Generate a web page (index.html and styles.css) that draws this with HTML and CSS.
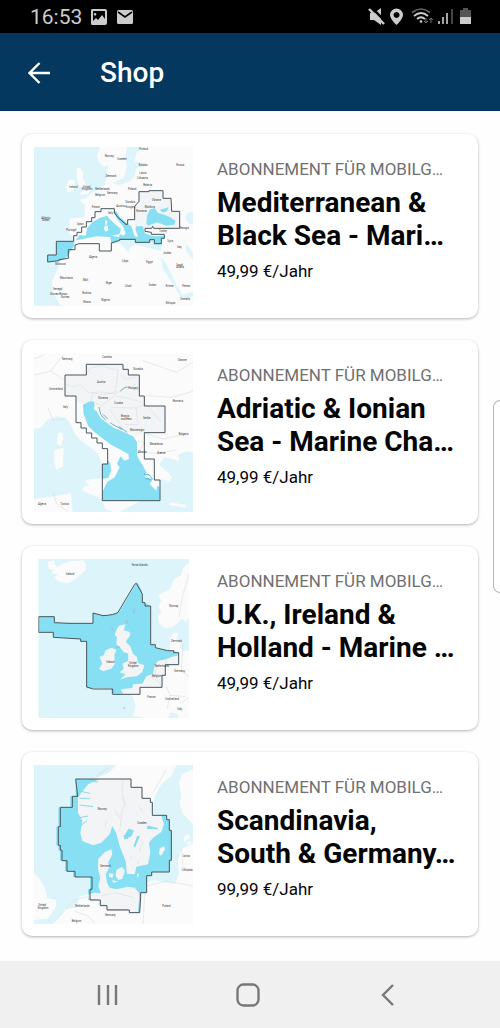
FILE: index.html
```html
<!DOCTYPE html>
<html lang="de">
<head>
<meta charset="utf-8">
<meta name="viewport" content="width=device-width, initial-scale=1">
<title>Shop</title>
<link rel="stylesheet" href="styles.css">
</head>
<body>
<div class="status">
  <div class="status-left">
    <span class="clock">16:53</span>
    <svg width="18" height="18" viewBox="0 0 18 18" aria-hidden="true"><path fill="#ccc" fill-rule="evenodd" d="M2 1h13q2 0 2 2v12q0 2-2 2H2q-1 0-1-2V3q0-2 1-2zM3 3v10l3-3 2 2 4-5 3 4V3zM5 5a1.3 1.3 0 1 0 .1 0z"/></svg>
    <svg width="18" height="18" viewBox="0 0 18 18" aria-hidden="true"><rect x="1" y="2" width="16" height="14" rx="1.5" fill="#ccc"/><path d="M2 4l7 5 7-5" fill="none" stroke="#000" stroke-width="1.6"/></svg>
  </div>
  <svg class="status-right" width="104" height="20" viewBox="0 0 104 20" aria-hidden="true">
    <path fill="#ccc" d="M2 6h4l7-5v17l-7-5H2z"/><path d="M2 -1l16 16" stroke="#000" stroke-width="2.500"/><path d="M1 2l15 15" stroke="#ccc" stroke-width="2.400"/>
    <path fill="#ccc" fill-rule="evenodd" d="M28.500 1.500a6.500 6.500 0 0 1 6.500 6.500c0 4-6.500 10-6.500 10S22 12 22 8a6.500 6.500 0 0 1 6.500-6.500zm0 3.500a3 3 0 1 0 .1 0z"/>
    <g fill="none" stroke-width="1.700"><path stroke="#666" d="M44 5.500q9-7 18 0"/><path stroke="#ccc" d="M46 9q7-6 14 0M49 12q4-3.500 8 0"/></g><circle cx="53" cy="14.500" r="1.300" fill="#ccc"/>
    <path stroke="#777" fill="none" d="M58 11v5m-2-2l2 2 2-2M63 16v-5m-2 2l2-2 2 2"/>
    <g stroke-width="1.600" stroke="#ccc"><path d="M71 14v3M75 10v7M79 6v11"/><path stroke="#555" d="M84 2v15"/></g>
    <path fill="#555" d="M92 3h3V1h5v2h3v7H92z"/><path fill="#ccc" d="M92 10h11v7H92z"/>
  </svg>
</div>
<header class="bar">
  <button class="back" type="button" aria-label="Zurück"><svg width="24" height="24" viewBox="0 0 24 24" aria-hidden="true"><path d="M23 12H3M12.500 2L2.500 12l10 10" fill="none" stroke="#fff" stroke-width="2.400"/></svg></button>
  <h1>Shop</h1>
</header>
<main class="list">
  <a class="card" href="#mediterranean">
    <svg class="map" viewBox="43 52 477 477" aria-hidden="true">
      <path class="land" d="M43 52h477v477H43z"/>
      <path class="sea" d="M43 52H242L232 75l5 22 15 14 14-5-4 28-6 31-20 13-20 12-16 15-22 7 17 13v37l-45 5-3 42 14 14 8 13-20 28-25 30-15 35-12 25 2 35 25 39H43zM322 52l-5 33 5 25-10 35-32 15 20 6 30-11 15-15 5-25 30-5-5-10-30-5 5-25 18-12-4-6zM275 345l25-5 28 30 2-15 18-10 74 18 8-18-5-17-125 2zM422 383l15 15 36 72 14 26 33-10v15l-35 9-5-12-24-40-26-40zM497 340l23 30v20l-20-25zM520 245l-18 5-5 15 10 15 13 5z"/>
      <path class="land" d="M170 117l12-3 10 16-4 15 12 20 13 14-5 12-30 6 12-16-12-16-6-18zM148 150l17 2-2 28-18 8-6-16z"/>
      <path class="zone" d="M345 270v-40l13-15v-29h30v-3h42v23h24l2 39h24v51h-100l-35-8z"/>
      <path class="bright" d="M110 336h52l2 10-20 34-15 10-10 3-35 4v-21h26z"/>
      <path class="bright" d="M168 332L180 316 198 318 203 295 218 278 240 265 262 258 272 270 292 288 304 298 300 312 310 318 318 312 310 290 294 270 283 248 290 245 300 262 325 283 335 290 345 320 355 322 348 300 348 290 370 290 375 310 400 320 434 318V328H425V344H404V332H390V340H347V331H300L275 342 272 322 230 320 190 328z"/>
      <path class="bright" d="M390 240L405 235 415 250 430 254 450 262 468 274 464 285 440 288 412 278 385 288 380 280 382 258zM420 240L448 233 440 246 428 248z"/>
      <path fill="#f6fbfc" d="M257 272l6 1-1 12h-5zM255 288h9l2 14-8 4-5-8zM276 318l26-6-4 10z"/>
      <path class="coast" d="M284 242l10 22 26 20"/>
      <path class="border" d="M84 397v-21h26v-41h52v-17h10v-10h14v-16h14v-16h16v-12h10v-18h18v-9h40v13l10 12 24 22h6v-14h21v-40l13-15v-29h30v-3h42v23h24l2 39h24v51h-78l-3-6-3 6h-20v9l19 3v6h39v12h-9v16h-21v-12h-14v8h-43v-9h-47v3l-25 8v24h-36v-22h-61l-12 4v14h-20v26l-28 4v3z"/>
      <g class="names"><text x="255" y="82">Norway</text><text x="293" y="91">Sweden</text><text x="359" y="60">Finland</text><text x="470" y="109">Russia</text><text x="357" y="110">Estonia</text><text x="359" y="133">Latvia</text><text x="352" y="147">Lithuania</text><text x="258" y="142">Denmark</text><text x="149" y="174">Ireland</text><text x="189" y="174">United</text><text x="186" y="182">Kingdom</text><text x="227" y="182">Netherlands</text><text x="262" y="193">Germany</text><text x="325" y="180">Poland</text><text x="371" y="170">Belarus</text><text x="227" y="199">Belgium</text><text x="397" y="214">Ukraine</text><text x="375" y="235">Moldova</text><text x="350" y="246">Romania</text><text x="216" y="234">France</text><text x="265" y="253">Italy</text><text x="290" y="231">Austria</text><text x="317" y="219">Slovakia</text><text x="317" y="235">Hungary</text><text x="65" y="268">Atlantic</text><text x="67" y="275">Ocean</text><text x="172" y="287">Spain</text><text x="140" y="303">Portugal</text><text x="418" y="308">Turkey</text><text x="480" y="298">Georgia</text><text x="443" y="338">Syria</text><text x="472" y="354">Iraq</text><text x="430" y="372">Jordan</text><text x="107" y="407">Morocco</text><text x="208" y="384">Algeria</text><text x="307" y="396">Libya</text><text x="380" y="400">Egypt</text><text x="470" y="408">Saudi</text><text x="470" y="415">Arabia</text><text x="121" y="447">Mauritania</text><text x="190" y="454">Mali</text><text x="258" y="462">Niger</text><text x="316" y="472">Chad</text><text x="387" y="470">Sudan</text><text x="438" y="473">Eritrea</text><text x="487" y="473">Yemen</text><text x="100" y="480">Senegal</text><text x="92" y="497">Guinea-Bissau</text><text x="188" y="493">Burkina</text><text x="124" y="505">Guinea</text><text x="190" y="520">Ghana</text><text x="245" y="513">Nigeria</text><text x="438" y="522">Ethiopia</text><text x="482" y="510">Somalia</text></g>
    </svg>
    <div class="info"><p class="kind">ABONNEMENT FÜR MOBILG…</p><h2>Mediterranean &amp;<br>Black Sea - Mari…</h2><p class="price">49,99 €/Jahr</p></div>
  </a>
  <a class="card" href="#adriatic">
    <svg class="map" viewBox="43 52 477 477" aria-hidden="true">
      <path class="land" d="M43 52h477v477H43z"/>
      <path class="sea" d="M43 279l20-2 20-25 30-10 25 4 15 20 15 32 20 20 30 22 15 12 15 33 4 25 5 20-4 18-58 2-10 14 60 25 12 30 55 24H147l12-15-5-55-60 10-51 6zM420 385l15-20 45 12-5-20 25-10 20 3v179H300l75-40 46-10v-65z"/>
      <path class="land" d="M115 293l13-3 3 20-8 24-12-12zM104 344l28-8-2 56-20 10-6-20zM197 432l62-6-7 24-4 20-50-28zM450 500l50 8-5 8-45-8zM404 375l36 30 17 20-8 12-30-8-15 0z"/>
      <path class="zone" d="M136 118h64V86h110v15h16v17h33v63h15v30h62v80h-62l-22 10-90-40-40-60-53 0v-20h-33z"/>
      <path class="bright" d="M190 207L206 199 222 196 225 208 222 220 232 228 240 245 262 262 285 278 315 290 340 302 352 320V360L372 395 380 410 376 425 400 430 390 445 410 465 412 450 420 455V495H248V470L262 440 285 425 300 395 292 385 302 362 315 375 328 370 326 355 272 326 225 290 205 270 192 235zM248 385H264V372L272 385 275 405 266 426 248 430z"/>
      <path d="M238 214l5 22 15 18m-8-18l14 14M272 262l35 20m-10-10l26 18" class="coast"/>
      <path d="M136 145l25 8 20-6 25 24 35-2 45 6M200 118l10-20 35-8 50 14-8 65-35 8-35-5M285 175l30-15 35-15M302 115l15 15 35-5M218 175l-3 20 30 15 40-30 50 10 30 10M275 215l75 2 5 50-40 0M270 220l35 50M350 215l30-8 45 52M43 118l50-12 40-50M93 106l45 30M43 70l30-12M370 75l100 35 50-30M380 180l75 5 65-18M375 292l55 18 70-15M353 315l20 5-18 35M373 350l40 3 55-10M85 215l15 40 35-5M100 468l10 35 35 25" class="line"/>
      <path d="M302 166l12-10 10-2M373 415l15 3m-12 10l18 5m-8-18l12 15" stroke="#5eb9ce" fill="none" stroke-width="3"/>
      <path class="border" d="M136 118h64V86h110v15h16v17h33v63h15v30h62v80h-62v79h30v63h17v62H248V385h16v-46h-16v-17h-16v-15h-16v-15h-16v-15h-16v-16h-15v-80h-33z"/>
      <g class="names"><text x="127" y="74">Germany</text><text x="248" y="66">Czechia</text><text x="340" y="102">Slovakia</text><text x="474" y="76">Ukraine</text><text x="88" y="163">Switzerland</text><text x="232" y="143">Austria</text><text x="326" y="160">Hungary</text><text x="235" y="189">Slovenia</text><text x="284" y="204">Croatia</text><text x="130" y="218">Italy</text><text x="304" y="244">Bosnia</text><text x="304" y="252">and Herz.</text><text x="370" y="250">Serbia</text><text x="459" y="200">Romania</text><text x="331" y="287">Montenegro</text><text x="477" y="297">Bulgaria</text><text x="390" y="328">Macedonia</text><text x="354" y="353">Albania</text><text x="412" y="356">Greece</text><text x="55" y="507">Algeria</text><text x="122" y="507">Tunisia</text></g>
    </svg>
    <div class="info"><p class="kind">ABONNEMENT FÜR MOBILG…</p><h2>Adriatic &amp; Ionian<br>Sea - Marine Cha…</h2><p class="price">49,99 €/Jahr</p></div>
  </a>
  <a class="card" href="#uk">
    <svg class="map" viewBox="43 56 477 477" aria-hidden="true">
      <path class="sea" d="M56 56h452v477H56z"/>
      <path class="land" d="M84 66L102 60 110 80 130 70 155 62 190 60 200 72 197 90 172 112 147 129 119 124 104 112 114 104 94 98 102 90 87 86zM508 66L490 84 484 104 462 118 452 145 416 165 424 180 416 200 426 214 414 229 419 250 437 264 457 261 473 250 487 235 497 245 508 233zM452 290L464 276 476 278 470 298 484 308 480 322 490 328 484 336 508 330V533H480L455 515 445 533 378 533 340 528 348 498 340 470 310 448 315 438 340 430 368 410 405 375 450 350z"/>
      <path class="bright" d="M57 229h47v18l44 2h72v-31l30 8 35-5 15-8 50-84 5-1 12 24v30l25 15v116h14v9l37 9h18l15 6v36h-40v30l-13 36h-66v21h-82v-16h-75V303h-18v-7l-82-5v-15H57z"/>
      <path class="zone" d="M297 256L318 252 312 270 330 275 332 285 318 304 332 318 340 340 352 350 355 368 374 375 368 395 352 408 325 410 300 418 318 402 300 396 312 385 308 370 325 362 326 340 312 335 300 320 290 312 292 290 285 285 290 270zM258 330L275 322 290 328 284 345 286 370 275 385 250 393 238 385 248 370 240 350 252 345zM303 447L338 443 340 432 368 430 380 408 400 400 405 375 415 362 440 357 455 350 477 345V372H437V404L427 441H360V461H310z"/>
      <path d="M412 378l-6 25 27 0M390 405l30 22 5 15M437 372l5-20M360 440v20M460 350l15-15M508 100l-20 70-10 60M490 310l-5 80 23 20M440 440l12 25 45 4M452 465l-10 40M480 490l28-18" class="line"/>
      <path class="sea" d="M445 532l10-15 16 2 6 12z"/>
      <path d="M342 206l3 3-4 6 4 6M320 240l4 2-4 8M276 262l4 8M312 501l3 5M290 320l10 0" stroke="#9ac5ce" stroke-width="4" fill="none"/>
      <path class="border" d="M57 229h47v18l44 2h72v-31l30 8q35-2 45-10l50-84 5-3 18 32v26h8v10h17v116h14v9l37 9h18v6h15v36h-40v32h-10v36h-66v21h-82v-16h-58l-20-6V303h-18v-7l-82-5v-15H57z"/>
      <g class="names"><text x="138" y="104">Iceland</text><text x="336" y="77">Faroe Islands</text><text x="449" y="201">Norway</text><text x="455" y="306">Denmark</text><text x="260" y="367">Ireland</text><text x="328" y="371">United</text><text x="325" y="379">Kingdom</text><text x="405" y="380">Netherlands</text><text x="397" y="409">Belgium</text><text x="464" y="396">Germany</text><text x="383" y="472">France</text><text x="437" y="478">Switzerland</text><text x="473" y="508">Italy</text></g>
      <path fill="#fff" d="M508 56h12v477h-12zM43 56h13v477H43z"/>
    </svg>
    <div class="info"><p class="kind">ABONNEMENT FÜR MOBILG…</p><h2>U.K., Ireland &amp;<br>Holland - Marine …</h2><p class="price">49,99 €/Jahr</p></div>
  </a>
  <a class="card" href="#scandinavia">
    <svg class="map" viewBox="43 57 477 477" aria-hidden="true">
      <path class="land" d="M43 57h477v477H43z"/>
      <path class="sea" d="M43 57H290L268 80 225 98 250 420 205 445 180 452 168 485 135 490 120 515 100 534H43V522L85 518 110 480 108 462 82 455 75 425 60 400 43 380zM470 57H520V70L488 84 478 110 485 150 480 170 488 200 520 235V290L485 310 475 345 478 385 465 415 400 402 345 425V210H400L405 150 425 115 455 90z"/>
      <path class="land" d="M494 270l14-5 2 12-18 12zM495 292l20-8-4 10zM485 318l14-10 10 10 11 4v60h-42z"/>
      <path class="bright" d="M168 99h166v25h33v33h25v12h6v39h43v13h8v32h6v90h-6v35h-53v11h-15v51h-18v14l-3 46h-31v-8h-67v-13h-20v-17h-37V430h6v-37h-51v-17h-24v-32h-15v-31h-5v-15h-6v-56h6v-58h36v-33h16z"/>
      <path class="zone" d="M240 99L205 115 185 140 175 155V200L188 225 182 260 188 285 220 298 245 290 270 265 278 240 290 262 300 300 318 345 322 383 345 385 350 362 385 355 392 320 388 290 400 275 425 258 433 235 425 210 398 208V169H392V157H367V124H334V99zM206 458V445L225 440 243 442 236 420 242 395 235 370 236 338 256 318 275 310 278 325 265 350 270 362 258 385 262 410 270 425 290 430 325 422 345 425 358 440V458L355 499H324V489H257V476H234V460zM268 382l14 2-4 12-10-4zM290 372l16-10 10 12-8 24-12 4-8-12zM420 307l14-6 2 10-12 18-6-6zM352 383l6 2-4 12zM278 402l18 5-16 3z"/>
      <path d="M315 270l12-20 14 4-6 15-20 10zM345 303l14-32-5 0-11 30zM385 240l30 8-32 0zM312 270l12-5v14M180 135l30 7m-30 15l30 0m-30 20l40 5m-40 33l25-5m-22 30l20-18M210 105l25 3" fill="#85ddf2" stroke="#86d9ed" stroke-width="3"/>
      <path d="M310 100l-3 38 9 35-10 25-6 60M265 65l-35 25 40-25M400 140l40-70M245 450l40-10 60 15M120 510l45-48 40-10M380 420l60-15 80 15M485 310l5 55 30 8M165 495l40 15 20 20M375 440l-5 94M305 155l15 25M355 180l15 15M285 190l15 25M370 285l-12 35M335 330v8M355 345v10M205 160l10-5M260 225l-3 20" class="line"/>
      <path class="border" d="M168 99h166v25h33v33h25v12h6v39h43v13h8v32h6v90h-6v35h-53v11h-15v51h-18v14l-3 46h-31v-8h-67v-13h-20v-17h-31V430h6v-37h-51v-17h-24v-32h-15v-31h-5v-15h-6v-56h6v-58h36v-33h16z"/>
      <g class="names"><text x="234" y="193">Norway</text><text x="353" y="233">Sweden</text><text x="242" y="364">Denmark</text><text x="489" y="334">Latvia</text><text x="486" y="376">Lithuania</text><text x="56" y="481">United</text><text x="54" y="489">Kingdom</text><text x="167" y="482">Netherlands</text><text x="256" y="509">Germany</text><text x="428" y="484">Poland</text><text x="156" y="528">Belgium</text></g>
    </svg>
    <div class="info"><p class="kind">ABONNEMENT FÜR MOBILG…</p><h2>Scandinavia,<br>South &amp; Germany…</h2><p class="price">99,99 €/Jahr</p></div>
  </a>
</main>
<div class="edge-handle"></div>
<nav class="system">
  <button type="button" aria-label="Letzte Apps"><svg width="24" height="24" viewBox="0 0 24 24"><path d="M3 2v20M12 2v20M20 2v20"/></svg></button>
  <button type="button" aria-label="Startbildschirm"><svg width="24" height="24" viewBox="0 0 24 24"><rect x="1.500" y="1.500" width="21" height="21" rx="6"/></svg></button>
  <button type="button" aria-label="Zurück"><svg width="24" height="24" viewBox="0 0 24 24"><path d="M17 2L7 12l10 10"/></svg></button>
</nav>
</body>
</html>
```
FILE: styles.css
```css
* { box-sizing: border-box; }
body {
  margin: 0;
  min-height: 100vh;
  display: flex;
  flex-direction: column;
  position: relative;
  background: #fefefe;
  color: #050505;
  font-family: Roboto, "Liberation Sans", sans-serif;
}
h1, h2, p { margin: 0; }
button { padding: 0; border: 0; background: none; display: flex; }
svg { display: block; }

.status {
  height: 33px;
  padding: 0 28px 0 30px;
  display: flex;
  align-items: center;
  justify-content: space-between;
  background: #000;
}
.status-left { display: flex; align-items: center; gap: 8px; }
.clock { color: #ccc; font-size: 21px; line-height: 24px; }

.bar {
  height: 78px;
  padding: 2px 27px 0;
  display: flex;
  align-items: center;
  gap: 49px;
  background: #04385f;
}
.bar h1 { color: #fff; font-size: 28px; line-height: 34px; font-weight: 500; }

.list {
  flex: 1;
  padding: 23px 22px 25px;
  display: flex;
  flex-direction: column;
  gap: 22px;
}
.card {
  min-height: 184px;
  padding: 13px 12px 12px;
  display: flex;
  gap: 24px;
  border-radius: 10px;
  background: #fff;
  box-shadow: 0 1px 3px rgba(0, 0, 0, .3);
  color: inherit;
  text-decoration: none;
}
.map { width: 159px; height: 159px; flex: none; }
.info { flex: 1; min-width: 0; padding-top: 11px; white-space: nowrap; }
.kind { color: #707070; font-size: 17px; line-height: 22px; }
.info h2 { margin: 6px 0 8px; font-size: 28px; line-height: 33px; font-weight: 700; }
.price { font-size: 17px; line-height: 22px; }

.land { fill: #fbfbfb; }
.sea { fill: #dcf4fa; }
.zone { fill: #f3f4f5; }
.bright { fill: #87dff4; }
.border { fill: none; stroke: #48565d; stroke-width: 3; }
.coast { fill: none; stroke: #6fb4c6; stroke-width: 3; }
.line { fill: none; stroke: #dcdfe1; stroke-width: 2; }
.names { fill: #333; font-size: 8px; }

.edge-handle {
  position: absolute;
  top: 400px;
  right: 0;
  width: 7px;
  height: 193px;
  border: 1px solid #b5b5b5;
  border-right: 0;
  border-radius: 8px 0 0 8px;
  background: #fff;
}

.system {
  height: 67px;
  padding: 0 42px 0 38px;
  display: flex;
  align-items: center;
  background: #f0f0f0;
}
.system button { flex: 1; justify-content: center; }
.system svg { fill: none; stroke: #777; stroke-width: 2.400; }
```
